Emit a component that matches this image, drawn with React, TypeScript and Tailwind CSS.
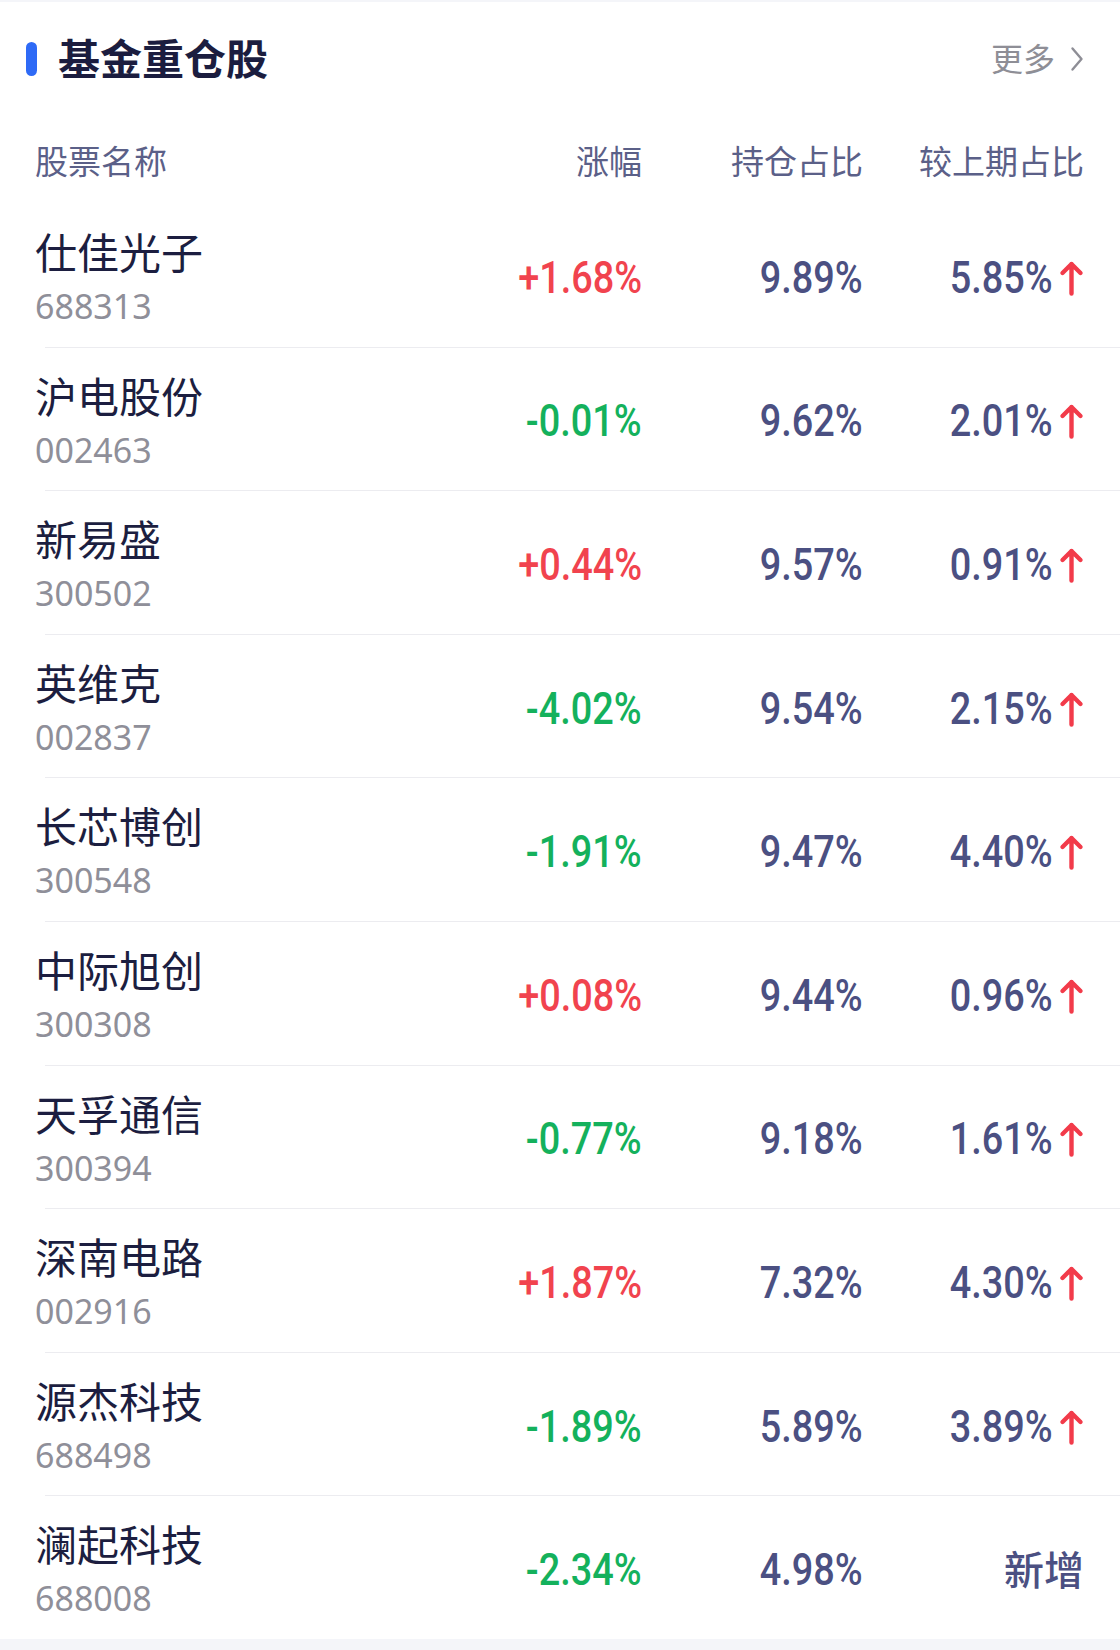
type Holding = {
  name: string
  code: string
  change: string
  weight: string
  prev: string | null
}

const holdings: Holding[] = [
  { name: '仕佳光子', code: '688313', change: '+1.68%', weight: '9.89%', prev: '5.85%' },
  { name: '沪电股份', code: '002463', change: '-0.01%', weight: '9.62%', prev: '2.01%' },
  { name: '新易盛', code: '300502', change: '+0.44%', weight: '9.57%', prev: '0.91%' },
  { name: '英维克', code: '002837', change: '-4.02%', weight: '9.54%', prev: '2.15%' },
  { name: '长芯博创', code: '300548', change: '-1.91%', weight: '9.47%', prev: '4.40%' },
  { name: '中际旭创', code: '300308', change: '+0.08%', weight: '9.44%', prev: '0.96%' },
  { name: '天孚通信', code: '300394', change: '-0.77%', weight: '9.18%', prev: '1.61%' },
  { name: '深南电路', code: '002916', change: '+1.87%', weight: '7.32%', prev: '4.30%' },
  { name: '源杰科技', code: '688498', change: '-1.89%', weight: '5.89%', prev: '3.89%' },
  { name: '澜起科技', code: '688008', change: '-2.34%', weight: '4.98%', prev: null },
]

const cjk = "font-['Noto_Sans','Noto_Sans_CJK_SC',sans-serif]"
const num = "font-['Roboto','Noto_Sans',sans-serif]"

const UpArrow = () => (
  <svg width="25" height="36" viewBox="0 0 25 36" className="ml-[6px] shrink-0">
    <path
      d="M12.5 33.5V4M3.5 13L12.5 4L21.5 13"
      fill="none"
      stroke="#f23b4a"
      strokeWidth="4.4"
      strokeLinecap="round"
      strokeLinejoin="round"
    />
  </svg>
)

const Value = ({ text, color }: { text: string; color: string }) => (
  <span
    className={`${num} inline-block origin-right scale-x-[0.86] text-[44px] leading-none font-medium ${color}`}
  >
    {text}
  </span>
)

const Row = ({ item }: { item: Holding }) => {
  const up = item.change.startsWith('+')
  return (
    <div className="flex h-[142.6px] items-start pr-[36px] pl-[35px]">
      {/* 名称 + 代码 */}
      <div className="flex flex-1 flex-col pt-[24px]">
        <div className={`${cjk} text-[42px] leading-[50px] text-[#1c1e40]`}>{item.name}</div>
        <div className={`${cjk} mt-[8px] text-[34px] leading-[40px] text-[#8f8f99]`}>
          {item.code}
        </div>
      </div>

      <div className="flex h-full w-[202px] items-center justify-end pt-[5px]">
        <Value text={item.change} color={up ? 'text-[#f1434e]' : 'text-[#14b15c]'} />
      </div>
      <div className="flex h-full w-[221px] items-center justify-end pt-[5px]">
        <Value text={item.weight} color="text-[#4b5082]" />
      </div>
      <div className="flex h-full w-[221px] items-center justify-end pt-[5px]">
        {item.prev ? (
          <>
            <Value text={item.prev} color="text-[#4b5082]" />
            <UpArrow />
          </>
        ) : (
          <span className={`${cjk} text-[40px] leading-none font-medium text-[#4b5082]`}>新增</span>
        )}
      </div>
    </div>
  )
}

export default function App() {
  return (
    <div className="w-[1120px] bg-white">
      <div className="h-[2px] bg-[#f4f5f9]" />

      {/* 标题 */}
      <div className="flex h-[114px] items-center pr-[36px] pl-[26px]">
        <div className="h-[34px] w-[11px] rounded-full bg-[#2e6af6]" />
        <div className={`${cjk} ml-[21px] flex-1 text-[42px] leading-none font-bold text-[#1b1d3f]`}>
          基金重仓股
        </div>
        <div className={`${cjk} flex items-center text-[32px] leading-none text-[#8e8e96]`}>
          更多
          <svg width="14" height="26" viewBox="0 0 14 26" className="ml-[15px]">
            <path
              d="M2.5 2.5L11.5 13L2.5 23.5"
              fill="none"
              stroke="#8e8e96"
              strokeWidth="2.4"
              strokeLinecap="round"
              strokeLinejoin="round"
            />
          </svg>
        </div>
      </div>

      {/* 表头 */}
      <div
        className={`${cjk} flex h-[88px] items-center pt-[4px] pr-[36px] pl-[35px] text-[33px] text-[#5b6088]`}
      >
        <div className="flex-1">股票名称</div>
        <div className="w-[202px] text-right">涨幅</div>
        <div className="w-[221px] text-right">持仓占比</div>
        <div className="w-[221px] text-right">较上期占比</div>
      </div>

      {holdings.map((item, i) => (
        <div key={item.code}>
          <Row item={item} />
          {i < holdings.length - 1 && <div className="ml-[45px] h-px bg-[#ececf0]" />}
        </div>
      ))}

      <div className="h-[14px] bg-[#f4f5f9]" />
    </div>
  )
}
